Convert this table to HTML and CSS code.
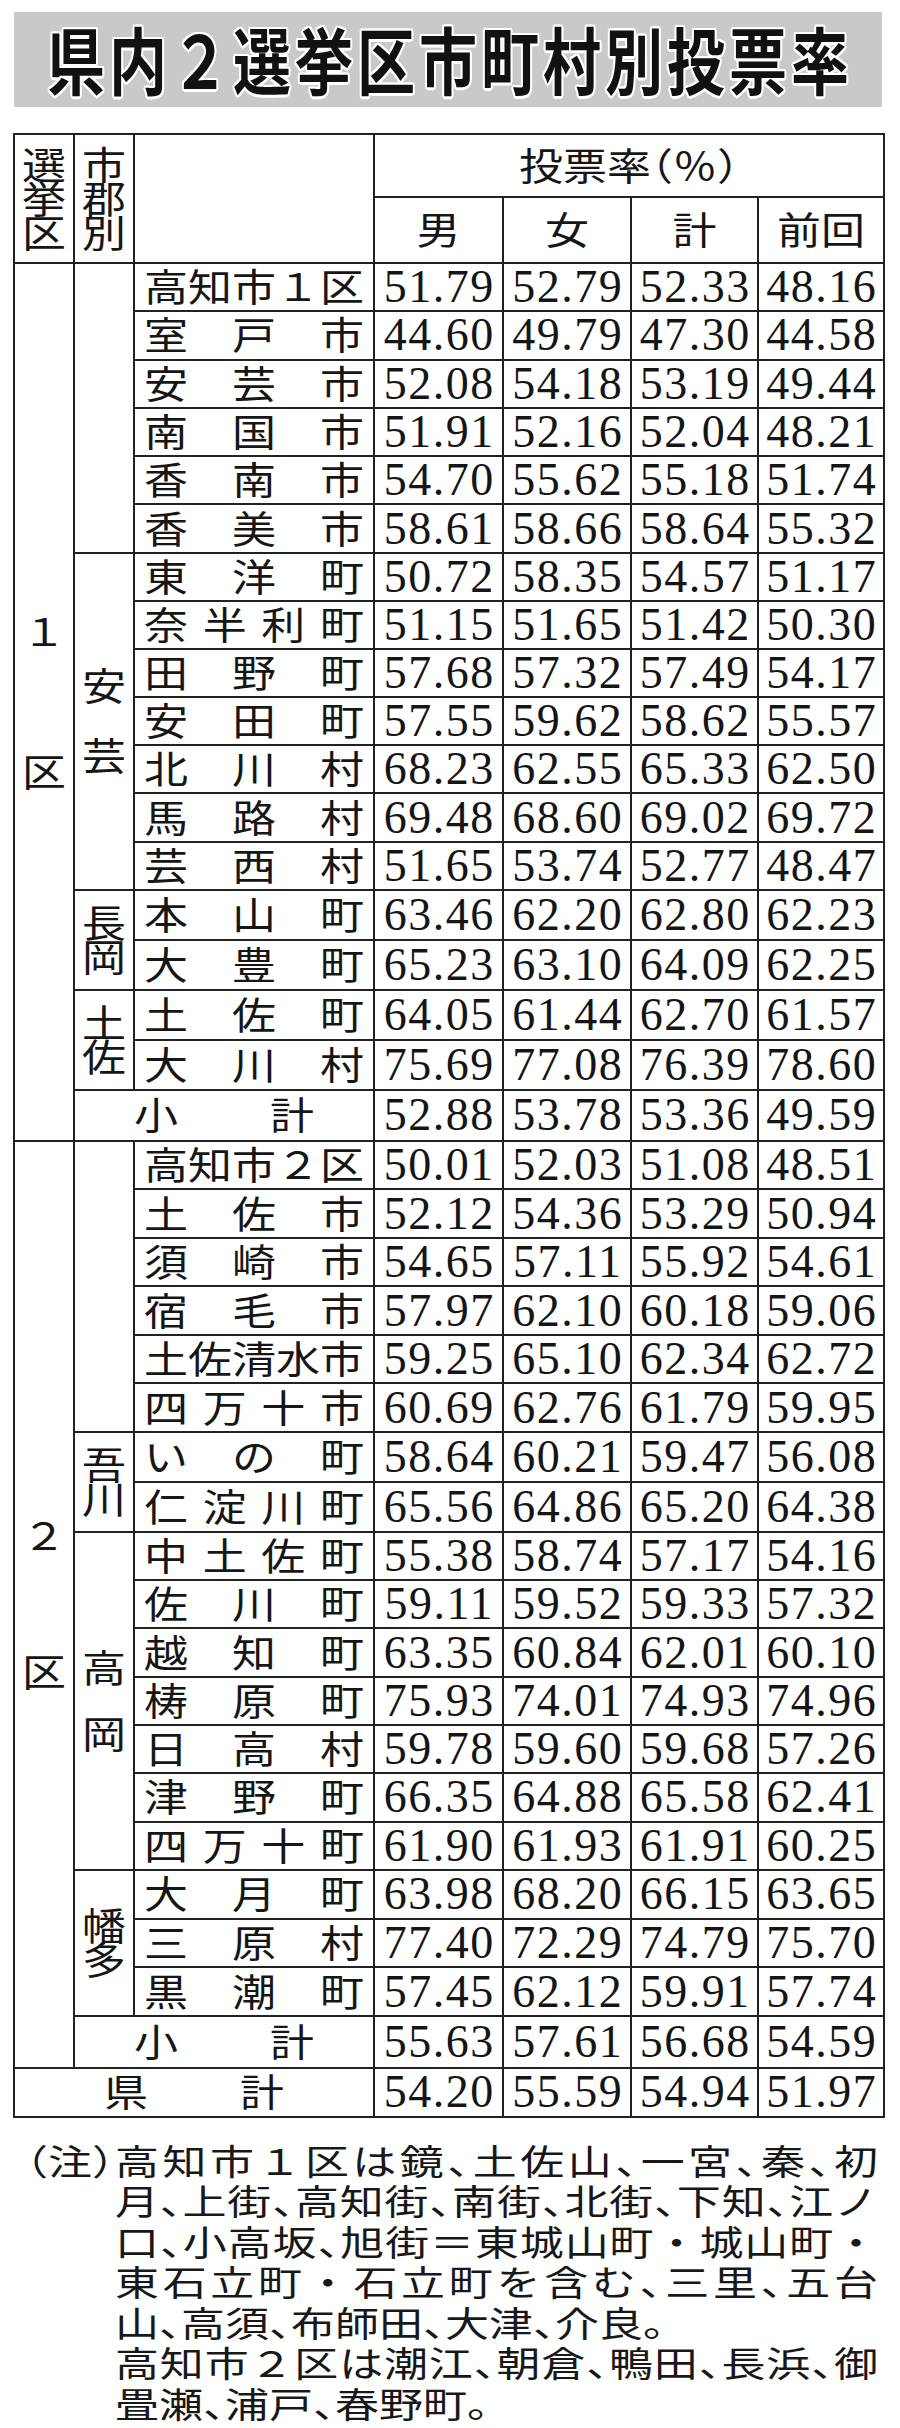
FILE: index.html
```html
<!DOCTYPE html>
<html lang="ja">
<head>
<meta charset="utf-8">
<title>県内2選挙区市町村別投票率</title>
<link rel="stylesheet" href="styles.css">
</head>
<body>
<div class="page">
  <div class="title"><span class="title-text">県内２選挙区市町村別投票率</span></div>

  <div class="tbl">
    <!-- header -->
    <div class="c k1 r2 vl"><span>選</span><span>挙</span><span>区</span></div>
    <div class="c k2 r2 vl"><span>市</span><span>郡</span><span>別</span></div>
    <div class="c k3 r2"></div>
    <div class="c k4s4"><span class="jp halt">投票率（％）</span></div>
    <div class="c k4"><span class="jp">男</span></div>
    <div class="c k5"><span class="jp">女</span></div>
    <div class="c k6"><span class="jp">計</span></div>
    <div class="c k7"><span class="jp">前回</span></div>

    <!-- 1区 -->
    <div class="c k1 r18 vl g106"><span>１</span><span>区</span></div>
    <div class="c k2 r6"></div>
    <div class="c k3 nm"><div class="d"><span>高</span><span>知</span><span>市</span><span>１</span><span>区</span></div></div>
    <div class="c k4 n">51.79</div><div class="c k5 n">52.79</div><div class="c k6 n">52.33</div><div class="c k7 n">48.16</div>
    <div class="c k3 nm"><div class="d"><span>室</span><span>戸</span><span>市</span></div></div>
    <div class="c k4 n">44.60</div><div class="c k5 n">49.79</div><div class="c k6 n">47.30</div><div class="c k7 n">44.58</div>
    <div class="c k3 nm"><div class="d"><span>安</span><span>芸</span><span>市</span></div></div>
    <div class="c k4 n">52.08</div><div class="c k5 n">54.18</div><div class="c k6 n">53.19</div><div class="c k7 n">49.44</div>
    <div class="c k3 nm"><div class="d"><span>南</span><span>国</span><span>市</span></div></div>
    <div class="c k4 n">51.91</div><div class="c k5 n">52.16</div><div class="c k6 n">52.04</div><div class="c k7 n">48.21</div>
    <div class="c k3 nm"><div class="d"><span>香</span><span>南</span><span>市</span></div></div>
    <div class="c k4 n">54.70</div><div class="c k5 n">55.62</div><div class="c k6 n">55.18</div><div class="c k7 n">51.74</div>
    <div class="c k3 nm"><div class="d"><span>香</span><span>美</span><span>市</span></div></div>
    <div class="c k4 n">58.61</div><div class="c k5 n">58.66</div><div class="c k6 n">58.64</div><div class="c k7 n">55.32</div>

    <div class="c k2 r7 vl g36"><span>安</span><span>芸</span></div>
    <div class="c k3 nm"><div class="d"><span>東</span><span>洋</span><span>町</span></div></div>
    <div class="c k4 n">50.72</div><div class="c k5 n">58.35</div><div class="c k6 n">54.57</div><div class="c k7 n">51.17</div>
    <div class="c k3 nm"><div class="d"><span>奈</span><span>半</span><span>利</span><span>町</span></div></div>
    <div class="c k4 n">51.15</div><div class="c k5 n">51.65</div><div class="c k6 n">51.42</div><div class="c k7 n">50.30</div>
    <div class="c k3 nm"><div class="d"><span>田</span><span>野</span><span>町</span></div></div>
    <div class="c k4 n">57.68</div><div class="c k5 n">57.32</div><div class="c k6 n">57.49</div><div class="c k7 n">54.17</div>
    <div class="c k3 nm"><div class="d"><span>安</span><span>田</span><span>町</span></div></div>
    <div class="c k4 n">57.55</div><div class="c k5 n">59.62</div><div class="c k6 n">58.62</div><div class="c k7 n">55.57</div>
    <div class="c k3 nm"><div class="d"><span>北</span><span>川</span><span>村</span></div></div>
    <div class="c k4 n">68.23</div><div class="c k5 n">62.55</div><div class="c k6 n">65.33</div><div class="c k7 n">62.50</div>
    <div class="c k3 nm"><div class="d"><span>馬</span><span>路</span><span>村</span></div></div>
    <div class="c k4 n">69.48</div><div class="c k5 n">68.60</div><div class="c k6 n">69.02</div><div class="c k7 n">69.72</div>
    <div class="c k3 nm"><div class="d"><span>芸</span><span>西</span><span>村</span></div></div>
    <div class="c k4 n">51.65</div><div class="c k5 n">53.74</div><div class="c k6 n">52.77</div><div class="c k7 n">48.47</div>

    <div class="c k2 r2 vl"><span>長</span><span>岡</span></div>
    <div class="c k3 nm"><div class="d"><span>本</span><span>山</span><span>町</span></div></div>
    <div class="c k4 n">63.46</div><div class="c k5 n">62.20</div><div class="c k6 n">62.80</div><div class="c k7 n">62.23</div>
    <div class="c k3 nm"><div class="d"><span>大</span><span>豊</span><span>町</span></div></div>
    <div class="c k4 n">65.23</div><div class="c k5 n">63.10</div><div class="c k6 n">64.09</div><div class="c k7 n">62.25</div>

    <div class="c k2 r2 vl"><span>土</span><span>佐</span></div>
    <div class="c k3 nm"><div class="d"><span>土</span><span>佐</span><span>町</span></div></div>
    <div class="c k4 n">64.05</div><div class="c k5 n">61.44</div><div class="c k6 n">62.70</div><div class="c k7 n">61.57</div>
    <div class="c k3 nm"><div class="d"><span>大</span><span>川</span><span>村</span></div></div>
    <div class="c k4 n">75.69</div><div class="c k5 n">77.08</div><div class="c k6 n">76.39</div><div class="c k7 n">78.60</div>

    <div class="c k2s2 tot"><span>小</span><span>計</span></div>
    <div class="c k4 n">52.88</div><div class="c k5 n">53.78</div><div class="c k6 n">53.36</div><div class="c k7 n">49.59</div>

    <!-- 2区 -->
    <div class="c k1 r19 vl g102"><span>２</span><span>区</span></div>
    <div class="c k2 r6"></div>
    <div class="c k3 nm"><div class="d"><span>高</span><span>知</span><span>市</span><span>２</span><span>区</span></div></div>
    <div class="c k4 n">50.01</div><div class="c k5 n">52.03</div><div class="c k6 n">51.08</div><div class="c k7 n">48.51</div>
    <div class="c k3 nm"><div class="d"><span>土</span><span>佐</span><span>市</span></div></div>
    <div class="c k4 n">52.12</div><div class="c k5 n">54.36</div><div class="c k6 n">53.29</div><div class="c k7 n">50.94</div>
    <div class="c k3 nm"><div class="d"><span>須</span><span>崎</span><span>市</span></div></div>
    <div class="c k4 n">54.65</div><div class="c k5 n">57.11</div><div class="c k6 n">55.92</div><div class="c k7 n">54.61</div>
    <div class="c k3 nm"><div class="d"><span>宿</span><span>毛</span><span>市</span></div></div>
    <div class="c k4 n">57.97</div><div class="c k5 n">62.10</div><div class="c k6 n">60.18</div><div class="c k7 n">59.06</div>
    <div class="c k3 nm"><div class="d"><span>土</span><span>佐</span><span>清</span><span>水</span><span>市</span></div></div>
    <div class="c k4 n">59.25</div><div class="c k5 n">65.10</div><div class="c k6 n">62.34</div><div class="c k7 n">62.72</div>
    <div class="c k3 nm"><div class="d"><span>四</span><span>万</span><span>十</span><span>市</span></div></div>
    <div class="c k4 n">60.69</div><div class="c k5 n">62.76</div><div class="c k6 n">61.79</div><div class="c k7 n">59.95</div>

    <div class="c k2 r2 vl"><span>吾</span><span>川</span></div>
    <div class="c k3 nm"><div class="d"><span>い</span><span>の</span><span>町</span></div></div>
    <div class="c k4 n">58.64</div><div class="c k5 n">60.21</div><div class="c k6 n">59.47</div><div class="c k7 n">56.08</div>
    <div class="c k3 nm"><div class="d"><span>仁</span><span>淀</span><span>川</span><span>町</span></div></div>
    <div class="c k4 n">65.56</div><div class="c k5 n">64.86</div><div class="c k6 n">65.20</div><div class="c k7 n">64.38</div>

    <div class="c k2 r7 vl g32"><span>高</span><span>岡</span></div>
    <div class="c k3 nm"><div class="d"><span>中</span><span>土</span><span>佐</span><span>町</span></div></div>
    <div class="c k4 n">55.38</div><div class="c k5 n">58.74</div><div class="c k6 n">57.17</div><div class="c k7 n">54.16</div>
    <div class="c k3 nm"><div class="d"><span>佐</span><span>川</span><span>町</span></div></div>
    <div class="c k4 n">59.11</div><div class="c k5 n">59.52</div><div class="c k6 n">59.33</div><div class="c k7 n">57.32</div>
    <div class="c k3 nm"><div class="d"><span>越</span><span>知</span><span>町</span></div></div>
    <div class="c k4 n">63.35</div><div class="c k5 n">60.84</div><div class="c k6 n">62.01</div><div class="c k7 n">60.10</div>
    <div class="c k3 nm"><div class="d"><span>梼</span><span>原</span><span>町</span></div></div>
    <div class="c k4 n">75.93</div><div class="c k5 n">74.01</div><div class="c k6 n">74.93</div><div class="c k7 n">74.96</div>
    <div class="c k3 nm"><div class="d"><span>日</span><span>高</span><span>村</span></div></div>
    <div class="c k4 n">59.78</div><div class="c k5 n">59.60</div><div class="c k6 n">59.68</div><div class="c k7 n">57.26</div>
    <div class="c k3 nm"><div class="d"><span>津</span><span>野</span><span>町</span></div></div>
    <div class="c k4 n">66.35</div><div class="c k5 n">64.88</div><div class="c k6 n">65.58</div><div class="c k7 n">62.41</div>
    <div class="c k3 nm"><div class="d"><span>四</span><span>万</span><span>十</span><span>町</span></div></div>
    <div class="c k4 n">61.90</div><div class="c k5 n">61.93</div><div class="c k6 n">61.91</div><div class="c k7 n">60.25</div>

    <div class="c k2 r3 vl"><span>幡</span><span>多</span></div>
    <div class="c k3 nm"><div class="d"><span>大</span><span>月</span><span>町</span></div></div>
    <div class="c k4 n">63.98</div><div class="c k5 n">68.20</div><div class="c k6 n">66.15</div><div class="c k7 n">63.65</div>
    <div class="c k3 nm"><div class="d"><span>三</span><span>原</span><span>村</span></div></div>
    <div class="c k4 n">77.40</div><div class="c k5 n">72.29</div><div class="c k6 n">74.79</div><div class="c k7 n">75.70</div>
    <div class="c k3 nm"><div class="d"><span>黒</span><span>潮</span><span>町</span></div></div>
    <div class="c k4 n">57.45</div><div class="c k5 n">62.12</div><div class="c k6 n">59.91</div><div class="c k7 n">57.74</div>

    <div class="c k2s2 tot"><span>小</span><span>計</span></div>
    <div class="c k4 n">55.63</div><div class="c k5 n">57.61</div><div class="c k6 n">56.68</div><div class="c k7 n">54.59</div>

    <div class="c k1s3 tot"><span>県</span><span>計</span></div>
    <div class="c k4 n">54.20</div><div class="c k5 n">55.59</div><div class="c k6 n">54.94</div><div class="c k7 n">51.97</div>
  </div>

  <div class="note">
    <div class="note-label nl">（注）</div>
    <div class="note-body">
      <div class="nl">高知市１区は鏡、土佐山、一宮、秦、初</div>
      <div class="nl">月、上街、高知街、南街、北街、下知、江ノ</div>
      <div class="nl">口、小高坂、旭街＝東城山町<span class="fw">・</span>城山町<span class="fw">・</span></div>
      <div class="nl">東石立町<span class="fw">・</span>石立町を含む、三里、五台</div>
      <div class="nl left">山、高須、布師田、大津、介良。</div>
      <div class="nl">高知市２区は潮江、朝倉、鴨田、長浜、御</div>
      <div class="nl left">畳瀬、浦戸、春野町。</div>
    </div>
  </div>
</div>
</body>
</html>
```

FILE: styles.css
```css
* {
  box-sizing: border-box;
  margin: 0;
  padding: 0;
}

html,
body {
  background: #ffffff;
}

body {
  width: 900px;
  min-height: 2428px;
  font-family: "Noto Sans CJK JP", "Noto Sans", sans-serif;
  color: #161616;
}

.page {
  padding-top: 12px;
}

/* ---------- title banner ---------- */
.title {
  margin-left: 14px;
  width: 868px;
  height: 95px;
  background: #c9c9c9;
  display: flex;
  align-items: center;
  justify-content: center;
}

.title-text {
  display: inline-block;
  font-size: 58px;
  font-weight: 700;
  letter-spacing: 4px;
  padding-left: 4px;
  line-height: 1;
  white-space: nowrap;
  color: #111111;
  transform: translateY(-2px) scaleY(1.25);
  text-shadow:
    2px 0 0 #fff, -2px 0 0 #fff, 0 2px 0 #fff, 0 -2px 0 #fff,
    1.5px 1.5px 0 #fff, -1.5px 1.5px 0 #fff, 1.5px -1.5px 0 #fff, -1.5px -1.5px 0 #fff;
}

/* ---------- table grid ---------- */
.tbl {
  margin: 26px 0 0 13px;
  width: 872px;
  display: grid;
  grid-template-columns: 60px 60px 240px 129px 128px 127px 126px;
  grid-template-rows:
    63px 66px
    repeat(6, 48.3px)
    repeat(7, 48.15px)
    repeat(4, 50px)
    51px
    repeat(6, 48.5px)
    repeat(2, 50px)
    repeat(7, 48.3px)
    repeat(3, 48.7px)
    52px
    49px;
  border-top: 2px solid #222;
  border-left: 2px solid #222;
}

.c {
  border-right: 2px solid #222;
  border-bottom: 2px solid #222;
  display: flex;
  align-items: center;
  justify-content: center;
  min-width: 0;
}

.k1 { grid-column: 1; }
.k2 { grid-column: 2; }
.k3 { grid-column: 3; }
.k4 { grid-column: 4; }
.k5 { grid-column: 5; }
.k6 { grid-column: 6; }
.k7 { grid-column: 7; }
.k4s4 { grid-column: 4 / span 4; }
.k2s2 { grid-column: 2 / span 2; }
.k1s3 { grid-column: 1 / span 3; }

.r2 { grid-row: span 2; }
.r3 { grid-row: span 3; }
.r6 { grid-row: span 6; }
.r7 { grid-row: span 7; }
.r18 { grid-row: span 18; }
.r19 { grid-row: span 19; }

/* header words */
.jp {
  display: inline-block;
  font-size: 44px;
  line-height: 1;
  white-space: nowrap;
  transform: translateY(-2px) scaleY(0.86);
}

.halt {
  font-feature-settings: "halt" 1;
}

/* vertical stacked labels */
.vl {
  flex-direction: column;
  font-size: 44px;
}

.vl span {
  display: block;
  height: 34px;
  line-height: 34px;
  transform: translateY(-2.5px) scaleY(0.86);
}

.g36 { gap: 36px; }
.g32 { gap: 32px; }
.g106 { gap: 106px; }
.g102 { gap: 102px; }

/* municipality names, distributed across the cell */
.nm {
  justify-content: stretch;
  padding: 0 9px;
}

.d {
  width: 100%;
  display: flex;
  justify-content: space-between;
  font-size: 44px;
  line-height: 1;
  transform: translateY(-2px) scaleY(0.86);
}

/* subtotal / total labels */
.tot {
  gap: 92px;
  font-size: 44px;
  line-height: 1;
}

.tot span {
  display: block;
  transform: translateY(-2px) scaleY(0.86);
}

/* numbers */
.n {
  font-family: "Liberation Serif", "Times New Roman", serif;
  font-size: 46px;
  line-height: 1;
  letter-spacing: 1.5px;
  padding-left: 1.5px;
  color: #151515;
}

/* ---------- note ---------- */
.note {
  margin: 22px 0 0 26px;
  width: 852px;
  display: flex;
  font-size: 44px;
  font-feature-settings: "halt" 1;
  color: #181818;
}

.note-label {
  flex: none;
  width: 89px;
}

.note-body {
  flex: 1;
  min-width: 0;
}

.nl {
  height: 40.5px;
  line-height: 40.5px;
  white-space: nowrap;
  text-align: justify;
  text-align-last: justify;
  transform: scaleY(0.8);
}

.note-label.nl {
  text-align: left;
  text-align-last: left;
}

.nl.left {
  text-align-last: left;
}

.fw {
  font-feature-settings: normal;
}
```
